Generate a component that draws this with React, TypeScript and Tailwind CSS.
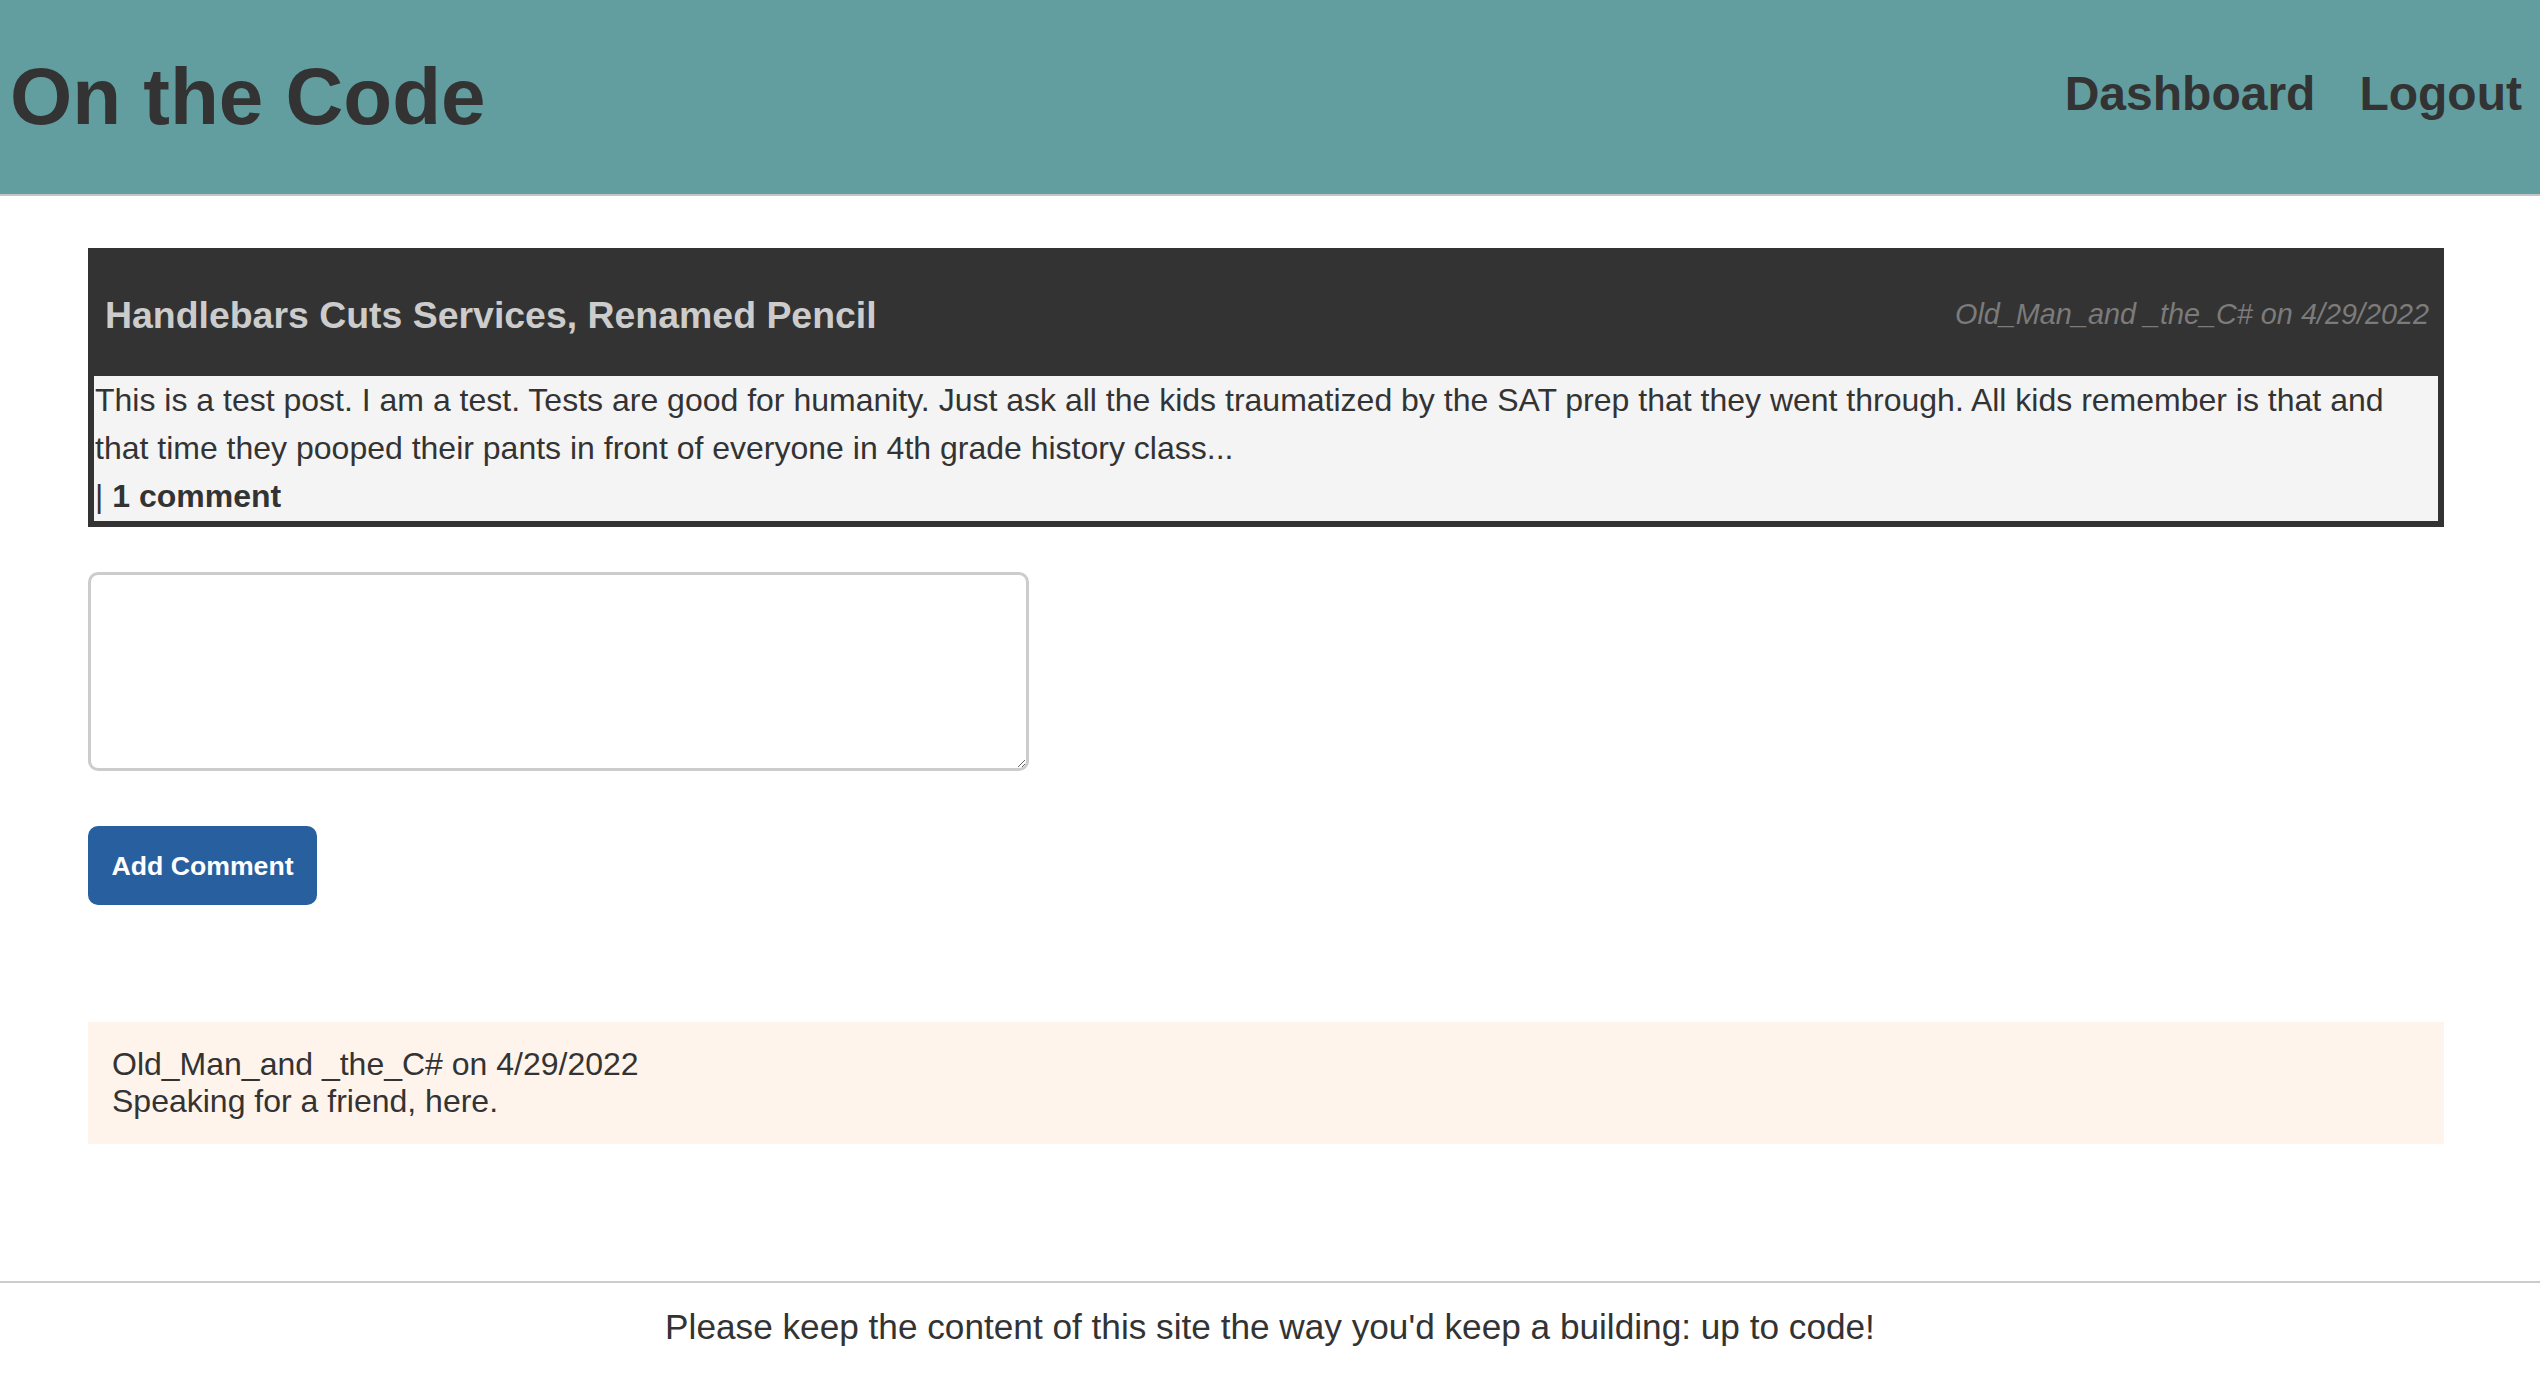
import React, { useState } from 'react';

const post = {
    title: 'Handlebars Cuts Services, Renamed Pencil',
    author: 'Old_Man_and _the_C#',
    date: '4/29/2022',
    body: 'This is a test post. I am a test. Tests are good for humanity. Just ask all the kids traumatized by the SAT prep that they went through. All kids remember is that and that time they pooped their pants in front of everyone in 4th grade history class...',
};

const comments = [
    { id: 1, author: 'Old_Man_and _the_C#', date: '4/29/2022', text: 'Speaking for a friend, here.' },
];

const App: React.FC = () => {
    const [comment, setComment] = useState('');

    return (
        <div className="min-h-screen flex flex-col bg-white text-[#333] font-['Liberation_Sans',Arial,Helvetica,sans-serif]">
            <header className="h-[196px] bg-[#629ea0] border-b-2 border-[#c4c4c4] flex items-center justify-between pl-[10px] pr-[18px]">
                <h1 className="text-[80px] font-bold leading-none">On the Code</h1>
                <nav className="flex gap-[44px] text-[48px] font-bold leading-none pb-[6px]">
                    <a href="#">Dashboard</a>
                    <a href="#">Logout</a>
                </nav>
            </header>

            <main className="flex-1 ml-[88px] mr-[96px]">
                <article className="mt-[52px] border-[6px] border-[#333]">
                    <div className="h-[122px] bg-[#333] flex items-center justify-between pl-[11px] pr-[9px]">
                        <h3 className="text-[37.44px] font-bold text-[#cccccc]">{post.title}</h3>
                        <p className="text-[28.8px] italic text-[#7b7b7b]">
                            {post.author} on {post.date}
                        </p>
                    </div>
                    <div className="bg-[#f4f4f4] text-[32px] leading-[48px] pl-[1px] pb-[1px]">
                        <p>{post.body}</p>
                        <p>
                            | <strong>{comments.length} comment</strong>
                        </p>
                    </div>
                </article>

                <form onSubmit={(e) => e.preventDefault()}>
                    <textarea
                        value={comment}
                        onChange={(e) => setComment(e.target.value)}
                        className="block mt-[45px] w-[941px] h-[199px] border-[3px] border-[#cccccc] rounded-[10px] bg-white resize"
                    />
                    <button
                        type="submit"
                        className="mt-[55px] w-[229px] h-[79px] bg-[#285f9f] text-white font-bold text-[26.67px] rounded-[10px]"
                    >
                        Add Comment
                    </button>
                </form>

                {comments.map((c) => (
                    <div key={c.id} className="mt-[117px] bg-[#fef4ec] p-[24px] text-[32px] leading-[37px]">
                        <p>
                            {c.author} on {c.date}
                        </p>
                        <p>{c.text}</p>
                    </div>
                ))}
            </main>

            <footer className="h-[93px] border-t-2 border-[#cccccc] flex items-center justify-center text-[35.2px] pb-[3px]">
                Please keep the content of this site the way you'd keep a building: up to code!
            </footer>
        </div>
    );
};

export default App;
